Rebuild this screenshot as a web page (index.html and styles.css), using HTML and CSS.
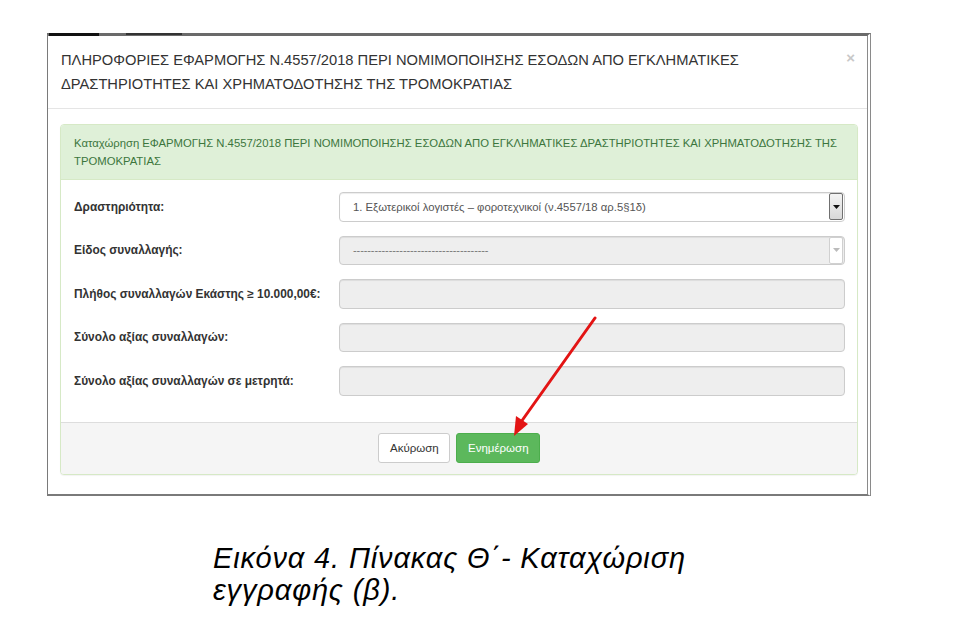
FILE: index.html
```html
<!DOCTYPE html>
<html lang="el">
<head>
<meta charset="utf-8">
<title>Καταχώριση εγγραφής</title>
<link rel="stylesheet" href="styles.css">
</head>
<body>
<div class="page">
  <div class="shot">
    <div class="topmarks"><span class="mark1"></span><span class="mark2"></span></div>
    <div class="modal-header">
      <h4 class="modal-title">ΠΛΗΡΟΦΟΡΙΕΣ ΕΦΑΡΜΟΓΗΣ Ν.4557/2018 ΠΕΡΙ ΝΟΜΙΜΟΠΟΙΗΣΗΣ ΕΣΟΔΩΝ ΑΠΟ ΕΓΚΛΗΜΑΤΙΚΕΣ<br>ΔΡΑΣΤΗΡΙΟΤΗΤΕΣ ΚΑΙ ΧΡΗΜΑΤΟΔΟΤΗΣΗΣ ΤΗΣ ΤΡΟΜΟΚΡΑΤΙΑΣ</h4>
      <span class="close">×</span>
    </div>
    <div class="modal-body">
      <div class="panel">
        <div class="panel-heading">Καταχώρηση ΕΦΑΡΜΟΓΗΣ Ν.4557/2018 ΠΕΡΙ ΝΟΜΙΜΟΠΟΙΗΣΗΣ ΕΣΟΔΩΝ ΑΠΟ ΕΓΚΛΗΜΑΤΙΚΕΣ ΔΡΑΣΤΗΡΙΟΤΗΤΕΣ ΚΑΙ ΧΡΗΜΑΤΟΔΟΤΗΣΗΣ ΤΗΣ<br>ΤΡΟΜΟΚΡΑΤΙΑΣ</div>
        <div class="panel-body">
          <div class="row">
            <label class="lbl">Δραστηριότητα:</label>
            <div class="field select">
              <span class="val">1. Εξωτερικοί λογιστές – φοροτεχνικοί (ν.4557/18 αρ.5§1δ)</span>
              <span class="dd"><svg width="7" height="4" viewBox="0 0 7 4"><path d="M0 0H7L3.5 4Z" fill="#111"/></svg></span>
            </div>
          </div>
          <div class="row">
            <label class="lbl">Είδος συναλλαγής:</label>
            <div class="field select disabled">
              <span class="val dash">--------------------------------------</span>
              <span class="dd light"><svg width="7" height="4" viewBox="0 0 7 4"><path d="M0 0H7L3.5 4Z" fill="#bbb"/></svg></span>
            </div>
          </div>
          <div class="row">
            <label class="lbl">Πλήθος συναλλαγών Εκάστης ≥ 10.000,00€:</label>
            <div class="field disabled"></div>
          </div>
          <div class="row">
            <label class="lbl">Σύνολο αξίας συναλλαγών:</label>
            <div class="field disabled"></div>
          </div>
          <div class="row">
            <label class="lbl">Σύνολο αξίας συναλλαγών σε μετρητά:</label>
            <div class="field disabled"></div>
          </div>
        </div>
        <div class="panel-footer">
          <button class="btn btn-default">Ακύρωση</button>
          <button class="btn btn-success">Ενημέρωση</button>
        </div>
      </div>
    </div>
    <svg class="arrow" width="100" height="130" viewBox="0 0 100 130">
      <line x1="96" y1="2" x2="22" y2="106" stroke="#e31414" stroke-width="3" stroke-linecap="round"/>
      <path d="M15 120 L17 100 L29 108 Z" fill="#e31414"/>
    </svg>
  </div>
  <div class="caption">Εικόνα 4. Πίνακας Θ΄- Καταχώριση<br>εγγραφής (β).</div>
</div>
</body>
</html>
```
FILE: styles.css
```css
* { box-sizing: border-box; }
html, body { margin: 0; padding: 0; background: #fff; }
body { font-family: "Liberation Sans", Arial, sans-serif; color: #333; }

.page { padding: 33px 0 0 47px; }

.shot {
  position: relative;
  width: 824px;
  height: 463px;
  border-top: 3px solid #6a6a6a;
  border-left: 1px solid #7a7a7a;
  border-bottom: 2px solid #7a7a7a;
  border-right: 4px double #8a8a8a;
  background: #fff;
}

.topmarks { position: absolute; top: -3px; left: 0; height: 3px; width: 200px; }
.topmarks .mark1 { position: absolute; left: 1px; top: 0; width: 50px; height: 3px; background: #111; }
.topmarks .mark2 { position: absolute; left: 78px; top: 0; width: 56px; height: 2px; background: #333; }

.modal-header {
  position: relative;
  padding: 12px 12px 12px 13px;
  border-bottom: 1px solid #e5e5e5;
}
.modal-title {
  margin: 0;
  font-size: 14.7px;
  font-weight: normal;
  line-height: 24px;
  color: #333;
}
.close {
  position: absolute;
  right: 12px;
  top: 14px;
  font-size: 15px;
  line-height: 1;
  color: #c8c8c8;
  font-weight: bold;
}

.modal-body { padding: 15px 9px 0 12px; }

.panel {
  border: 1px solid #d6e9c6;
  border-radius: 4px;
  background: #fff;
  box-shadow: 0 1px 1px rgba(0,0,0,.05);
}
.panel-heading {
  background: #dff0d8;
  color: #3c763d;
  font-size: 11.3px;
  line-height: 18px;
  padding: 9px 12px 9px 13px;
  border-bottom: 1px solid #d6e9c6;
  border-radius: 3px 3px 0 0;
  height: 55px;
}

.panel-body {
  padding: 12px 12px 26px 13px;
  display: flex;
  flex-direction: column;
  gap: 14px;
}
.row {
  display: flex;
  align-items: center;
  height: 29.5px;
}
.lbl {
  width: 265px;
  flex: none;
  font-size: 11.9px;
  font-weight: bold;
  color: #333;
}
.field {
  flex: 1;
  height: 29.5px;
  border: 1px solid #ccc;
  border-radius: 4px;
  background: #fff;
  display: flex;
  align-items: center;
  position: relative;
  box-shadow: inset 0 1px 1px rgba(0,0,0,.075);
}
.field.disabled { background: #eee; }
.val {
  flex: 1;
  font-size: 11.3px;
  color: #555;
  padding-left: 13px;
  white-space: nowrap;
}
.val.dash { color: #777; font-size: 11px; letter-spacing: -0.1px; }
.dd {
  width: 14px;
  height: 27px;
  margin-right: 1px;
  display: flex;
  align-items: center;
  justify-content: center;
  border: 1px solid #707070;
  border-radius: 2px;
  background: linear-gradient(#f4f4f4, #d8d8d8);
}
.dd.light {
  border-color: #d0d0d0;
  background: #fff;
}

.panel-footer {
  background: #f5f5f5;
  border-top: 1px solid #ddd;
  border-radius: 0 0 3px 3px;
  height: 52px;
  display: flex;
  justify-content: center;
  align-items: center;
  gap: 6px;
  padding-bottom: 1px;
}
.btn {
  font-family: "Liberation Sans", Arial, sans-serif;
  font-size: 11.5px;
  height: 30px;
  padding: 0 11px;
  border-radius: 3px;
  border: 1px solid #ccc;
  cursor: pointer;
}
.btn-default { background: #fff; color: #333; width: 72px; }
.btn-success { background: #5cb85c; border-color: #4cae4c; color: #fff; width: 84px; }

.arrow { position: absolute; left: 451px; top: 280px; }

.caption {
  margin: 46px 0 0 166px;
  font-size: 29px;
  font-style: italic;
  letter-spacing: 0.85px;
  line-height: 32px;
  color: #000;
  font-family: "Liberation Sans", Arial, sans-serif;
}
```
